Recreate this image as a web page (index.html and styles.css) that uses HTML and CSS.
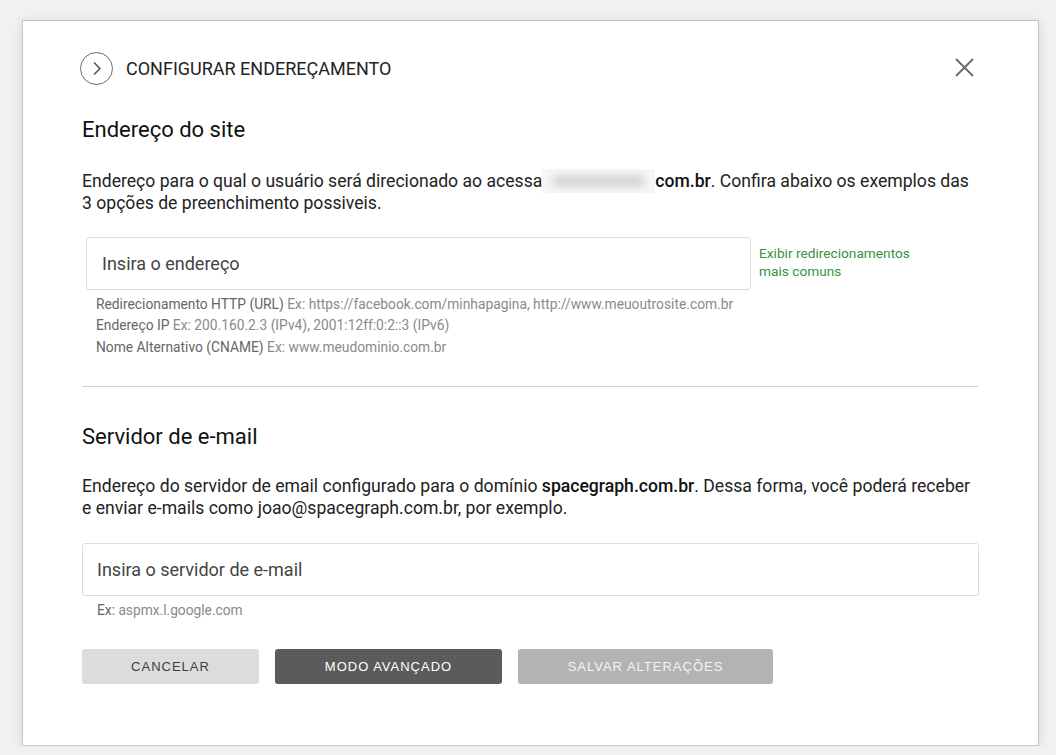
FILE: index.html
```html
<!DOCTYPE html>
<html lang="pt-BR">
<head>
<meta charset="utf-8">
<title>Configurar endereçamento</title>
<link rel="stylesheet" href="styles.css">
</head>
<body>
<div class="modal">
  <header class="modal-header">
    <span class="circle-icon">
      <svg width="33" height="33" viewBox="0 0 33 33"><circle cx="16.5" cy="16.5" r="16" fill="none" stroke="#6a6a6a" stroke-width="1"/><path d="M14.5 11 L20 16.5 L14.5 22" fill="none" stroke="#555" stroke-width="1.6" stroke-linecap="round" stroke-linejoin="round"/></svg>
    </span>
    <h1 class="modal-title">CONFIGURAR ENDEREÇAMENTO</h1>
    <button class="close-btn" aria-label="Fechar">
      <svg width="19" height="19" viewBox="0 0 19 19"><path d="M1 1 L18 18 M18 1 L1 18" stroke="#6b6b6b" stroke-width="1.9" fill="none"/></svg>
    </button>
  </header>

  <section class="section">
    <h2 class="section-title first">Endereço do site</h2>
    <p class="section-text">Endereço para o qual o usuário será direcionado ao acessa<span class="blur" aria-hidden="true"></span><strong>com.br</strong>. Confira abaixo os exemplos das 3 opções de preenchimento possiveis.</p>
    <div class="address-block">
      <div class="input-row">
        <div class="field field-short">Insira o endereço</div>
        <a class="link" href="#">Exibir redirecionamentos<br>mais comuns</a>
      </div>
      <ul class="hints">
        <li><span class="hint-label">Redirecionamento HTTP (URL)</span> Ex: https://facebook.com/minhapagina, http://www.meuoutrosite.com.br</li>
        <li><span class="hint-label">Endereço IP</span> Ex: 200.160.2.3 (IPv4), 2001:12ff:0:2::3 (IPv6)</li>
        <li><span class="hint-label">Nome Alternativo (CNAME)</span> Ex: www.meudominio.com.br</li>
      </ul>
    </div>
  </section>

  <hr class="divider">

  <section class="section">
    <h2 class="section-title second">Servidor de e-mail</h2>
    <p class="section-text">Endereço do servidor de email configurado para o domínio <strong>spacegraph.com.br</strong>. Dessa forma, você poderá receber e enviar e-mails como joao@spacegraph.com.br, por exemplo.</p>
    <div class="field field-full">Insira o servidor de e-mail</div>
    <p class="email-hint"><span class="hint-label">Ex:</span> aspmx.l.google.com</p>
  </section>

  <div class="actions">
    <button class="btn btn-light">CANCELAR</button>
    <button class="btn btn-dark">MODO AVANÇADO</button>
    <button class="btn btn-disabled">SALVAR ALTERAÇÕES</button>
  </div>
</div>
</body>
</html>
```

FILE: styles.css
```css
* { box-sizing: border-box; }
html, body { margin: 0; padding: 0; }
body {
  background: #f1f1f1;
  font-family: Roboto, "Liberation Sans", Arial, sans-serif;
  color: #222;
  padding: 20px 0 0 22px;
}
.modal {
  width: 1017px;
  height: 726px;
  background: #fff;
  border: 1px solid #c6c6c6;
  box-shadow: 0 2px 10px rgba(0,0,0,0.12);
  padding: 30px 59px 0 59px;
}
.modal-header {
  display: flex;
  align-items: center;
  height: 34px;
  margin-left: -2px;
}
.circle-icon { display: flex; width: 33px; height: 33px; }
.modal-title {
  margin: 0 0 0 13px;
  font-size: 18px;
  font-weight: 400;
  color: #222;
  flex: 1;
}
.close-btn {
  background: none;
  border: 0;
  padding: 0;
  margin-right: 5px;
  margin-top: -2px;
  display: flex;
  cursor: pointer;
}
.section-title {
  margin: 0;
  font-size: 22px;
  font-weight: 400;
  color: #111;
  line-height: 24px;
}
.section-title.first { margin-top: 33px; }
.section-title.second { margin-top: 38px; }
.section-text {
  margin: 27px 0 0 0;
  font-size: 17.6px;
  line-height: 21.5px;
  color: #222;
}
.section-text strong { font-weight: 500; color: #111; }
.blur {
  display: inline-block;
  position: relative;
  width: 113px;
  height: 24px;
  vertical-align: -6px;
  background: #f6f6f6;
  overflow: hidden;
}
.blur::before {
  content: "";
  position: absolute;
  left: 10px;
  right: 10px;
  top: 7px;
  height: 10px;
  background: #cfcfcf;
  border-radius: 5px;
  filter: blur(4px);
}
.address-block { padding: 0 4px; }
.input-row {
  display: flex;
  align-items: flex-start;
  margin-top: 22px;
}
.field {
  height: 53px;
  border: 1px solid #dcdcdc;
  border-radius: 3px;
  font-size: 18px;
  color: #444;
  display: flex;
  align-items: center;
  padding-left: 15px;
}
.field-short { width: 665px; }
.field-full { width: 897px; margin-top: 24px; padding-left: 14px; }
.link {
  margin-left: 8px;
  margin-top: 7px;
  font-size: 13.7px;
  line-height: 18px;
  color: #33933f;
  text-decoration: none;
}
.hints {
  list-style: none;
  margin: 4px 0 0 0;
  padding: 0 0 0 10px;
  font-size: 13.8px;
  line-height: 21.5px;
  color: #8a8a8a;
}
.hints li { height: 21.5px; }
.hint-label { color: #666; }
.divider {
  border: 0;
  border-top: 1px solid #d2d2d2;
  margin: 28px 0 0 0;
  width: 896px;
}
.email-hint {
  margin: 6px 0 0 15px;
  font-size: 13.75px;
  color: #8a8a8a;
}
.actions {
  display: flex;
  gap: 16px;
  margin-top: 31px;
}
.btn {
  height: 35px;
  border: 0;
  border-radius: 3px;
  font-family: "Liberation Sans", Arial, sans-serif;
  font-size: 13px;
  letter-spacing: 1px;
  padding: 0;
}
.btn-light { width: 177px; background: #dcdcdc; color: #3e3e3e; }
.btn-dark { width: 227px; background: #5b5b5b; color: #fff; }
.btn-disabled { width: 255px; background: #b3b3b3; color: #f4f4f4; }
```
